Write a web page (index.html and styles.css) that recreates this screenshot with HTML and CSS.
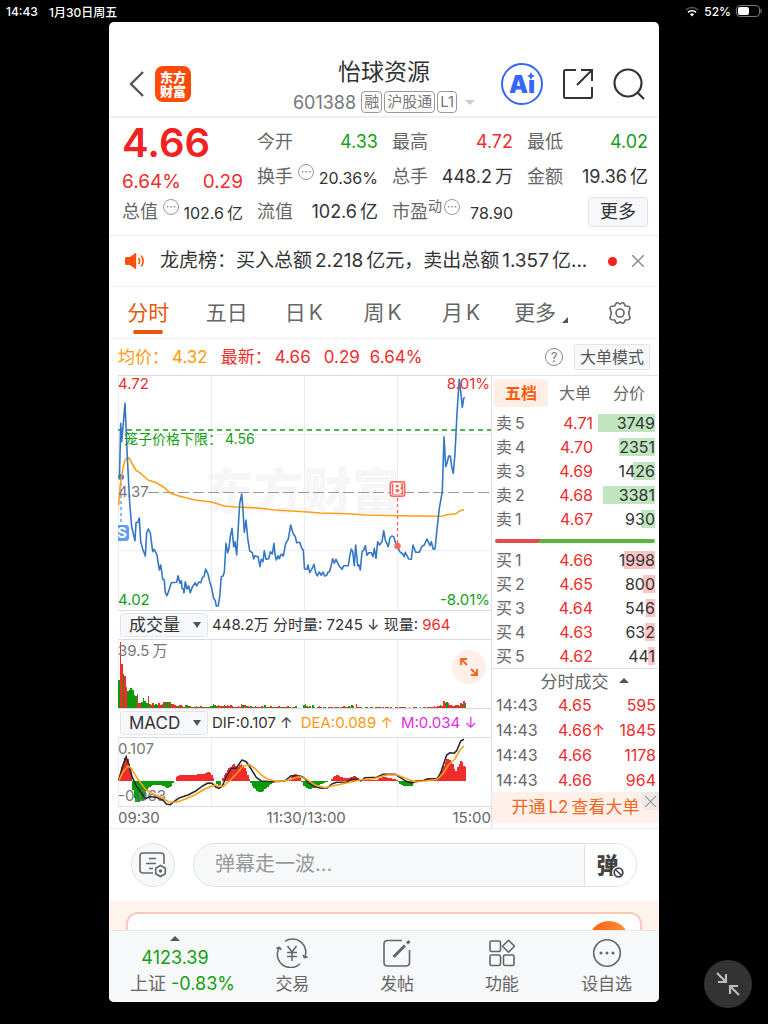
FILE: index.html
```html
<!DOCTYPE html>
<html lang="zh-CN">
<head>
  <meta charset="UTF-8" />
  <meta name="viewport" content="width=device-width, initial-scale=1" />
  <title>怡球资源 601388</title>
  <link rel="stylesheet" href="styles.css">
</head>
<body>

<div class="status">
  <span>14:43</span>
  <span class="status-date">1月30日周五</span>
  <svg width="14" height="11" viewBox="0 0 14 11"><path d="M1 4a8.500 8.500 0 0 1 12 0" fill="none" stroke="#555" stroke-width="1.500"/><path d="M3 6.400a5.700 5.700 0 0 1 8 0" fill="none" stroke="#fff" stroke-width="1.600"/><path d="M7 10.500 4.900 8.300a3 3 0 0 1 4.200 0z" fill="#fff"/></svg>
  <span>52%</span>
  <svg width="26" height="12" viewBox="0 0 26 12"><rect x=".5" y=".5" width="23" height="11" rx="3.500" fill="none" stroke="#777"/><rect x="2" y="2" width="11" height="8" rx="2" fill="#fff"/><path d="M25 4v4" stroke="#777" stroke-width="1.200"/></svg>
</div>

<div class="app">
  <header class="header">
    <div class="header-side">
      <button class="icon-button" aria-label="返回"><svg width="16" height="26" viewBox="0 0 16 26"><path d="M14 1 2 13l12 12" fill="none" stroke="#555" stroke-width="2.400"/></svg></button>
      <div class="logo">东方<br>财富</div>
    </div>
    <div class="header-title">
      <h1>怡球资源</h1>
      <div class="code">601388 <span class="badge first">融</span><span class="badge">沪股通</span><span class="badge">L1</span><i class="caret"></i></div>
    </div>
    <div class="header-side right">
      <button class="ai" aria-label="Ai">Ai<svg width="8" height="8" viewBox="0 0 8 8"><path d="M4 0 5.300 2.700 8 4 5.300 5.300 4 8 2.700 5.300 0 4l2.700-1.300z" fill="#3567ff"/></svg></button>
      <button class="icon-button" aria-label="分享"><svg width="32" height="32" viewBox="0 0 32 32" fill="none" stroke="#333" stroke-width="2"><path d="M14 2H3.500Q2 2 2 3.500v25Q2 30 3.500 30h25q1.500 0 1.500-1.500V19M19 2h11v11M30 2 15 17"/></svg></button>
      <button class="icon-button" aria-label="搜索"><svg width="32" height="32" viewBox="0 0 32 32" fill="none" stroke="#333" stroke-width="2.200"><circle cx="15" cy="15" r="13.500"/><path d="m24 24 7 7"/></svg></button>
    </div>
  </header>

  <section class="quote">
    <div class="price">4.66</div>
    <div class="cell"><span>今开</span><b class="down">4.33</b></div>
    <div class="cell"><span>最高</span><b class="up">4.72</b></div>
    <div class="cell"><span>最低</span><b class="down">4.02</b></div>

    <div class="cell change up"><b>6.64%</b><b>0.29</b></div>
    <div class="cell"><span>换手</span><i class="info">···</i><b class="small">20.36%</b></div>
    <div class="cell"><span>总手</span><b><i class="num">448.2</i>万</b></div>
    <div class="cell"><span>金额</span><b><i class="num">19.36</i>亿</b></div>

    <div class="cell"><span>总值</span><i class="info">···</i><b class="small"><i class="num">102.6</i>亿</b></div>
    <div class="cell"><span>流值</span><b><i class="num">102.6</i>亿</b></div>
    <div class="cell"><span>市盈<sup>动</sup></span><i class="info pe">···</i><b class="small">78.90</b></div>
    <div class="cell"><button class="more">更多</button></div>
  </section>

  <section class="news">
    <svg width="20" height="16" viewBox="0 0 20 16"><path d="M0 5.500Q0 4 1.500 4H5l5-3.700q1.200-.6 1.200.8v13.800q0 1.400-1.200.8L5 12H1.500Q0 12 0 10.500z" fill="#ff4f0c"/><path d="M13.500 5a5 5 0 0 1 0 6M16 2.500a8 8 0 0 1 0 11" fill="none" stroke="#ff4f0c" stroke-width="1.600"/></svg>
    <a class="news-text" href="#">龙虎榜：买入总额<i class="num">2.218</i>亿元，卖出总额<i class="num">1.357</i>亿...</a>
    <i class="dot"></i>
    <button class="icon-button" aria-label="关闭"><svg width="12" height="12" viewBox="0 0 12 12"><path d="m0 0 12 12M12 0 0 12" stroke="#888" stroke-width="1.400"/></svg></button>
  </section>

  <nav class="tabs">
    <button class="tab active">分时</button>
    <button class="tab">五日</button>
    <button class="tab">日<i class="num">K</i></button>
    <button class="tab">周<i class="num">K</i></button>
    <button class="tab">月<i class="num">K</i></button>
    <button class="tab">更多<i class="corner"></i></button>
    <button class="tab" aria-label="设置"><svg width="26" height="26" viewBox="0 0 26 26" fill="none" stroke="#666" stroke-width="1.600"><path d="M9 3.500Q10 1.800 13 4.200 16 1.800 17 3.500l1.300 2.600 3 .2Q24 7 22.500 9.500 21 13 22.500 16.500 24 19 21.300 19.700l-3 .2L17 22.500Q16 24.200 13 21.800 10 24.200 9 22.500l-1.300-2.600-3-.2Q2 19 3.500 16.500 5 13 3.500 9.500 2 7 4.700 6.300l3-.2z"/><circle cx="13" cy="13" r="4"/></svg></button>
  </nav>

  <section class="summary">
    <div class="summary-values up"><span class="avg">均价：<i class="num">4.32</i></span><span>最新：<i class="num">4.66</i></span><span>0.29</span><span>6.64%</span></div>
    <button class="help" aria-label="帮助">?</button>
    <button class="mode">大单模式</button>
  </section>

  <section class="board">
    <div class="charts">
      <svg class="chart" viewBox="0 0 373 236">
        <text class="watermark" x="87" y="134">东方财富</text>
        <path class="grid" d="M93.500 0v236M186.500 0v236M279.500 0v236M0 59.500h373M0 175.500h373M.5 0v236"/>
        <path class="frame" d="M0 .5h373M0 235.500h373"/>
        <path d="M30 117.500h343" stroke="#999" stroke-dasharray="11 4"/>
        <path d="M0 55h373" stroke="#12a012" stroke-width="1.600" stroke-dasharray="5 4"/>
        <path d="M3 102v50" stroke="#5c9df5" stroke-width="1.400" stroke-dasharray="3 3"/>
        <circle cx="3" cy="102" r="3" fill="#3a7fd5"/>
        <polyline class="line avg-line" points=".7,130 2.300,110 5,93.300 7,85 9.700,82.300 12,84.300 17.700,95 21.700,97.700 30,105 38.300,107.700 45,111.700 51.700,117.700 60,120.700 76.700,125 93.300,127 106.700,131 116.700,132 140,133 156.700,135 190,137 202,138 228.700,138.700 248.700,140 278.700,140.700 320.300,141.300 324.700,141 328.700,139.700 338,138.700 342,135.700 346,134.700"/>
        <polyline class="line price-line" points="1.500,102 2.700,48.300 3.700,66.700 7,28.300 9.300,81.700 11.700,128 13.700,151.700 17,165.700 18,147.700 20,147.300 21.300,143 22.700,166.700 24.700,174 27.300,181 28.700,157.700 30.300,154 32.300,158 34.700,176.700 36.300,174.300 39,180 41.300,195 42.700,190 44.700,204 46.300,205 47.300,217.700 49,220.700 51,215 53.300,207.700 58.700,207.300 60,200.700 62,208.300 63.300,205.700 64,213.300 65.300,214 66,218 67.300,206.700 69,214 70.700,211 72.300,217.700 74.300,212 77.300,207.700 78.700,211 80.700,207 82.700,207.700 84.700,202 86,201.700 87.700,194 90,199 91.700,206.700 93.700,213.300 95.700,223.300 97.300,225.700 98.300,231 100.300,231 101.700,221.700 103.300,201.700 105,201 106.300,197.300 108,168.300 109.700,177.700 111,173.300 112.300,161.700 114,153.300 115.700,171.700 117,166.700 118.700,180 120.300,151.700 121.700,128.300 123.700,119 125,135 126.300,157.300 128,145 129.700,163.300 131.700,176 134.300,177.700 135.700,184 137,180.700 140,181.700 142,191.700 143.300,184.300 145,186.700 146.300,175.700 148,184.300 150.700,183.700 152.300,176.700 154.300,179 156,168.300 157,179.300 158.300,185 160.300,180.700 161.300,183.700 163.300,179 165.300,181 167.700,168.300 170.300,164 172.700,150 175,158.300 177.300,161.700 178.700,167.700 181.700,167.300 183.700,173.300 185.300,175 186.500,194 189,194.300 190,190 191.700,197.700 193.700,194.300 196,189.300 197.700,197.700 199.300,201 201.300,197 203.300,200.300 205,197 206.700,201 208.700,200.300 210,197 211.300,197 213,191.700 214.700,183.700 216.300,188.300 218,184.300 221,190.700 224,194.300 225.700,190.700 230.300,190.700 231.700,181.700 233.300,174 234.700,176.700 236.300,190.700 237.700,170 239.700,191 241,190 242.300,195 244,176.700 245.700,175 247.300,170.700 249,180.300 250.700,177.700 253.300,177.700 255,181.700 256.300,173.300 258,183.300 259.700,166.700 261.300,170 264,166.700 265.700,155.700 267.300,165 270.300,171.700 272,162.700 273.700,161 275.700,161.700 277.700,168.300 279.700,171.700 281.700,176.700 284.700,179 286,181.700 287.300,177.300 290.700,184 293.300,184.300 295,170 297.700,177.300 301.300,177.300 303.700,171.700 306.300,170 309,164 312,170.700 313.300,166.700 315.300,174.300 317,174 319.300,151.700 321.300,133.300 324.300,116.700 326,61.700 327.700,91.700 329,88.300 330.700,81 332.300,81 333.700,91.700 335.300,98.300 337,78.300 339,38.300 340.300,18.300 341.300,4.300 342.700,16.700 344.300,32.300 345.700,23.300 346.700,22.300"/>
        <path d="M279.500 123v46" stroke="#f26a5e" stroke-width="1.400" stroke-dasharray="3 3"/>
        <circle cx="279.500" cy="171" r="3.200" fill="#f26a5e"/>
        <rect x="271.500" y="106" width="16" height="16" rx="3" fill="#f9685c"/>
        <rect x="273.500" y="108" width="12" height="12" rx="1" fill="none" stroke="#fff" stroke-width=".8"/>
        <text class="flag" x="279.500" y="119">B</text>
        <rect x="-4" y="150" width="15" height="16" rx="3" fill="#5c9df5"/>
        <text class="flag" x="4" y="163">S</text>
        <text class="fill-up" x="0" y="14">4.72</text>
        <text class="fill-up" x="372" y="14" text-anchor="end">8.01%</text>
        <text class="fill-down limit" x="6" y="69">笼子价格下限：<tspan dx="3">4.56</tspan></text>
        <text class="fill-gray" x="0" y="122">4.37</text>
        <text class="fill-down" x="0" y="230">4.02</text>
        <text class="fill-down" x="372" y="230" text-anchor="end">-8.01%</text>
      </svg>

      <div class="indicator">
        <span class="picker"><select aria-label="副图指标一"><option>成交量</option><option>MACD</option></select></span>
        <span>448.2万 分时量: 7245 ↓ 现量: <span class="up">964</span></span>
      </div>
      <svg class="chart" id="volume" viewBox="0 0 373 70">
        <path class="grid" d="M93.500 0v69M186.500 0v69M279.500 0v69M.5 0v69"/>
        <path class="frame" d="M0 .5h373M0 69.500h373"/>
        <g class="bars" id="volumeBars"></g>
        <text class="fill-gray" x="0" y="17">39.5<tspan dx="3">万</tspan></text>
        <circle cx="351" cy="28" r="17" fill="#ffefe6"/>
        <path d="M343 26v-6h6M343 20l6 6M359 30v6h-6M359 36l-6-6" fill="none" stroke="#f0641e" stroke-width="1.800"/>
      </svg>

      <div class="indicator">
        <span class="picker"><select aria-label="副图指标二"><option>MACD</option><option>成交量</option></select></span>
        <span>DIF:0.107 ↑</span>
        <span class="avg">DEA:0.089 ↑</span>
        <span class="macd">M:0.034 ↓</span>
      </div>
      <svg class="chart" id="macd" viewBox="0 0 373 70">
        <path class="grid" d="M93.500 0v69M186.500 0v69M279.500 0v69M.5 0v69"/>
        <path class="frame" d="M0 .5h373M0 69.500h373"/>
        <g class="bars" id="macdBars"></g>
        <text class="fill-gray" x="0" y="17">0.107</text>
        <text class="fill-gray" x="0" y="64">-0.063</text>
        <polyline class="line dif-line" points=".7,43 5,28 8,19.700 10.700,27 14,39.700 18.300,49 23.300,55.700 27.300,61.700 31.700,59.700 38.300,60.300 45,63 48.300,67 52.300,67.700 56.700,64 61.700,60.700 70,58 78.300,53.700 85,48.700 90,46 94,46.300 98.300,50.300 101,51.300 104.300,49 108.300,39.700 113.300,31.300 118.300,31.300 121,27 124,23 128.300,24.700 133.300,32.300 138.300,40.300 143.300,44 153.300,44.700 166.700,44 173.300,38.700 182,39 186,40.700 190.300,45.700 197,49.700 203.700,51.300 209.300,51 213.700,47 218.700,45.300 228.700,45 233.700,42.300 238.700,42 243,44 247,40.700 258.700,40.300 265.300,37.300 277,37.300 282,40.300 287,43.700 293.700,46 300.300,44.300 307,43.300 312,41.700 319.300,41.700 322.700,35.700 325.300,28 328.700,18 332,15.700 336,16.300 338.700,13.700 342.700,4 346,2.300"/>
        <polyline class="line avg-line" points=".7,43.700 5,34.700 10,29 13.300,31.300 20,42.300 26.700,51.300 33.300,56.300 43.300,60.300 50,64.700 58.300,65.300 66.700,62.300 76.700,58 86.700,52 96.700,48 105,49.700 111.700,43.700 120,35.300 125,29 131.700,27.700 136.700,31.300 143.300,38 150,42.300 160,44.700 170,43.300 178.300,40.300 182,39.700 188.700,42.300 197,48 207,50.700 215.300,48.700 228.700,46 242,43 255.300,41.700 268.700,38 278.700,37.700 288.700,41.700 297,44.700 308.700,43.700 319.300,42.300 325.300,36.300 330.300,28 337,22 342,13 346,9"/>
      </svg>
      <div class="axis"><span>09:30</span><span>11:30/13:00</span><span>15:00</span></div>
    </div>

    <aside class="side">
      <div class="side-tabs">
        <button class="side-tab active">五档</button>
        <button class="side-tab">大单</button>
        <button class="side-tab">分价</button>
      </div>
      <table class="depth sell">
        <tr><td>卖<i class="num">5</i></td><td>4.71</td><td style="background-size: 57px 18px">3749</td></tr>
        <tr><td>卖<i class="num">4</i></td><td>4.70</td><td style="background-size: 36px 18px">2351</td></tr>
        <tr><td>卖<i class="num">3</i></td><td>4.69</td><td style="background-size: 22px 18px">1426</td></tr>
        <tr><td>卖<i class="num">2</i></td><td>4.68</td><td style="background-size: 52px 18px">3381</td></tr>
        <tr><td>卖<i class="num">1</i></td><td>4.67</td><td style="background-size: 14px 18px">930</td></tr>
      </table>
      <div class="ratio"></div>
      <table class="depth buy">
        <tr><td>买<i class="num">1</i></td><td>4.66</td><td style="background-size: 31px 18px">1998</td></tr>
        <tr><td>买<i class="num">2</i></td><td>4.65</td><td style="background-size: 12px 18px">800</td></tr>
        <tr><td>买<i class="num">3</i></td><td>4.64</td><td style="background-size: 9px 18px">546</td></tr>
        <tr><td>买<i class="num">4</i></td><td>4.63</td><td style="background-size: 10px 18px">632</td></tr>
        <tr><td>买<i class="num">5</i></td><td>4.62</td><td style="background-size: 7px 18px">441</td></tr>
      </table>
      <button class="trades-title">分时成交<i class="caret-up"></i></button>
      <table class="trades">
        <tr><td>14:43</td><td>4.65</td><td>595</td></tr>
        <tr><td>14:43</td><td>4.66↑</td><td>1845</td></tr>
        <tr><td>14:43</td><td>4.66</td><td>1178</td></tr>
        <tr><td>14:43</td><td>4.66</td><td>964</td></tr>
      </table>
      <div class="upsell">
        <a href="#">开通<i class="num">L2</i>查看大单</a>
        <button class="upsell-close" aria-label="关闭"><svg width="11" height="11" viewBox="0 0 11 11"><path d="m0 0 11 11M11 0 0 11" stroke="#999" stroke-width="1.200"/></svg></button>
      </div>
    </aside>
  </section>

  <section class="comment">
    <button class="round" aria-label="弹幕设置"><svg width="28" height="26" viewBox="0 0 28 26" fill="none" stroke="#666" stroke-width="1.600"><path d="M14 21H4q-3 0-3-3V4q0-3 3-3h18q3 0 3 3v8M10 6.500h7M7 11.500h10M10 16.500h4"/><path d="m21.500 13.500 4.800 2.800v5.400l-4.800 2.800-4.800-2.800v-5.400z"/><circle cx="21.500" cy="19" r=".9" fill="#666"/></svg></button>
    <div class="pill">
      <input type="text" placeholder="弹幕走一波..." aria-label="弹幕">
      <button class="danmu" aria-label="关闭弹幕">弹<svg width="13" height="13" viewBox="0 0 13 13"><circle cx="6.500" cy="6.500" r="6.500" fill="#fff"/><circle cx="6.500" cy="6.500" r="4.300" fill="none" stroke="#444" stroke-width="1.800"/><path d="m3.500 3.500 6 6" stroke="#444" stroke-width="1.600"/></svg></button>
    </div>
  </section>

  <section class="promo">
    <div class="promo-card"><i class="promo-ball"></i></div>
  </section>

  <footer class="bottom">
    <a class="index" href="#">
      <span class="index-value"><i class="caret-up"></i>4123.39</span>
      <span>上证 <span class="down">-0.83%</span></span>
    </a>
    <button class="action"><svg width="32" height="30" viewBox="0 0 32 30" fill="none" stroke="#666" stroke-width="1.600"><path d="M9 3.300A13.300 13.300 0 0 1 28.500 20M28.500 20l-1.500-3M28.500 20l3-1.500M24 25.700A13.300 13.300 0 0 1 3.500 9M3.500 9l-3 1.500M3.500 9 5 12"/><path d="m11.500 8 4.500 6 4.500-6M16 14v9M11 14.500h10M11 18.500h10"/></svg>交易</button>
    <button class="action"><svg width="28" height="30" viewBox="0 0 28 30" fill="none" stroke="#666" stroke-width="1.600"><path d="M19 2.500H4.500Q1 2.500 1 6v18.500Q1 28 4.500 28h18.500q3.500 0 3.500-3.500V12"/><path d="M10.500 19 22 7.500" stroke-width="3"/><path d="m24 5.500 2.500-2.500" stroke-width="3"/></svg>发帖</button>
    <button class="action"><svg width="26" height="30" viewBox="0 0 26 30" fill="none" stroke="#666" stroke-width="1.600"><rect x="1" y="3" width="10.500" height="10.500" rx="1.500"/><rect x="1" y="17" width="10.500" height="10.500" rx="1.500"/><rect x="14.500" y="17" width="10.500" height="10.500" rx="1.500"/><path d="m19.500 2.200 6 6-6 6-6-6z" stroke-linejoin="round"/></svg>功能</button>
    <button class="action"><svg width="30" height="30" viewBox="0 0 30 30"><circle cx="15" cy="15" r="13.300" fill="none" stroke="#666" stroke-width="1.600"/><g fill="#666"><circle cx="9" cy="15" r="1.500"/><circle cx="15" cy="15" r="1.500"/><circle cx="21" cy="15" r="1.500"/></g></svg>设自选</button>
  </footer>
</div>

<button class="shrink" aria-label="缩小"><svg width="24" height="24" viewBox="0 0 24 24" fill="none" stroke="#bbb" stroke-width="2.200"><path d="m1 1 9 9M10 2v8H2M23 23l-9-9M14 22v-8h8"/></svg></button>

<script>
  const STEP = 1.555;
  const RED = '#f22c2c';
  const GREEN = '#0a9b0a';

  // positive = red bar, negative = green bar
  const volume = [
    -28, 66, 44, -34, 32, 21, -17, -18, -20, -18, -13, -12, 14, 5, 5, -6, -10, -7, -5, 12,
    -4, 3, 5, -3, -4, -3, 5, 3, -4, 6, -6, -6, 6, -6, 4, 4, 3, 2, -2, 3,
    3, -2, 1, 3, -3, -2, 2, 1, 1, -1, 2, -1, 1, 2, -1, 1, -1, 1, 1, -2,
    -2, -4, -3, 2, 3, 2, -2, 2, 3, -2, 3, 2, 3, 2, -1, 1, 1, 2, 1, 4,
    -3, 3, -2, 2, 1, -2, 1, -1, 2, 1, 1, -1, 2, 1, -3, 1, -1, 1, 2, -1,
    1, 1, -1, 2, -1, 1, 1, -1, 1, 2, -1, 0, 1, 1, -2, 0, 0, 0, 0, -3,
    -4, 2, 1, -2, 0, -3, 1, 0, -1, 2, 1, 0, -1, 1, 0, -1, 1, 1, 0, 1,
    1, -1, 0, 1, -1, 2, 1, -1, -2, 1, -3, 2, 0, 4, 1, -1, 1, 0, 0, -1,
    1, 0, -1, 1, 0, -1, 1, 1, -1, 0, 1, 0, 1, -1, 0, 1, 0, 0, -1, 1,
    0, 1, -1, 1, 1, 0, 0, 1, 0, 0, 1, -1, 0, 0, 1, 0, -1, 1, 0, 1,
    1, -1, 1, 2, 1, 2, 2, -3, 2, 7, 5, -6, 5, 3, 3, 2, -2, 3, 3, -2,
    5, -4, 7, -5
  ];

  // outline of the MACD histogram, [x, height]
  const macd = [
    [0, 2], [5, 20], [8, 26], [11, 16], [13, 4], [14, -10], [16, -20], [18, -22], [25, -19],
    [29, -8], [33, -5], [40, -4], [46, -6], [50, -8], [53, -5], [56, 0], [58, 4], [63, 6],
    [70, 5], [78, 6], [86, 7], [90, 9], [94, 5], [96, 0], [98, -4], [101, -5], [103, 0],
    [106, 6], [110, 12], [115, 17], [119, 12], [122, 17], [125, 14], [128, 9], [131, 0],
    [134, -6], [139, -11], [143, -12], [147, -8], [152, -4], [157, 0], [170, 0], [173, 4],
    [176, 7], [182, 4], [183, 0], [185, -5], [189, -8], [194, -8], [202, -4], [209, -1],
    [212, 0], [214, 3], [219, 6], [224, 3], [230, 2], [235, 5], [239, 3], [242, 0], [249, 1],
    [259, 1], [265, 4], [269, 3], [277, 1], [279, 0], [282, -4], [287, -6], [294, -5],
    [297, 0], [305, 1], [310, 3], [317, 2], [320, 4], [324, 12], [328, 22], [331, 21],
    [334, 17], [337, 9], [341, 18], [343, 20], [345, 15], [348, 13]
  ];

  function addBar(group, x, base, value) {
    if (!value) return;
    const rect = document.createElementNS('http://www.w3.org/2000/svg', 'rect');
    rect.setAttribute('x', x);
    rect.setAttribute('width', STEP);
    rect.setAttribute('y', value > 0 || group.id === 'volumeBars' ? base - Math.abs(value) : base);
    rect.setAttribute('height', Math.abs(value));
    rect.setAttribute('fill', value > 0 ? RED : GREEN);
    group.appendChild(rect);
  }

  function heightAt(x) {
    const i = macd.findIndex(p => p[0] > x);
    const [x0, y0] = macd[i - 1];
    const [x1, y1] = macd[i];
    return y0 + (y1 - y0) * (x - x0) / (x1 - x0);
  }

  const volumeBars = document.getElementById('volumeBars');
  volume.forEach((v, i) => addBar(volumeBars, i * STEP, 69, v));

  const macdBars = document.getElementById('macdBars');
  for (let x = 0; x < 347; x += STEP) {
    addBar(macdBars, x, 43.5, heightAt(x));
  }
</script>

</body>
</html>
```

FILE: styles.css
```css
* {
  box-sizing: border-box;
}

body {
  margin: 0;
  background: #000;
  color: #333;
  font-family: Inter, "Noto Sans CJK SC", sans-serif;
  font-size: 16px;
}

button,
input,
select {
  font: inherit;
  color: inherit;
  background: none;
  border: none;
  padding: 0;
  margin: 0;
}

button {
  cursor: pointer;
}

a {
  color: inherit;
  text-decoration: none;
}

svg {
  display: block;
  flex: none;
}

b,
i {
  font-weight: 400;
  font-style: normal;
}

.up {
  color: #f22c2c;
}

.down {
  color: #12a012;
}

.avg {
  color: #ff9a0d;
}

.macd {
  color: #e32ae3;
}

.num {
  margin: 0 3px;
}

/* device status bar */
.status {
  display: flex;
  align-items: center;
  gap: 5px;
  height: 22px;
  padding: 0 6px;
  color: #fff;
  font-size: 12px;
  font-weight: 500;
}

.status-date {
  margin-left: 6px;
  margin-right: auto;
}

.app {
  margin: 0 109px 22px;
  background: #fff;
  border-radius: 5px;
  overflow: hidden;
}

/* header */
.header {
  display: grid;
  grid-template-columns: 1fr auto 1fr;
  align-items: center;
  height: 96px;
  padding: 34px 14px 0;
  border-bottom: 2px solid #f0f0f2;
}

.header-side {
  display: flex;
  align-items: center;
  gap: 10px;
  padding: 0 0 4px 6px;
}

.header-side.right {
  justify-content: flex-end;
  gap: 19px;
}

.logo {
  width: 36px;
  height: 36px;
  padding-top: 4px;
  border-radius: 8px;
  background: #ff4a08;
  color: #fff;
  font-size: 13px;
  font-weight: 900;
  line-height: 14px;
  text-align: center;
}

.header-title {
  text-align: center;
}

h1 {
  margin: 0;
  font-size: 23px;
  font-weight: 400;
  line-height: 32px;
}

.code {
  display: flex;
  align-items: center;
  gap: 2px;
  height: 28px;
  color: #777;
  font-size: 18px;
}

.badge {
  height: 22px;
  padding: 0 2px;
  border: 1px solid #999;
  border-radius: 4px;
  font-size: 15px;
  line-height: 20px;
}

.badge.first {
  margin-left: 3px;
}

.caret {
  margin-left: 6px;
  border: 5px solid transparent;
  border-top-color: #ccc;
  border-bottom: 0;
}

.ai {
  display: flex;
  align-items: center;
  justify-content: center;
  width: 42px;
  height: 42px;
  border: 2px solid #3567ff;
  border-radius: 50%;
  color: #3567ff;
  font-size: 24px;
  font-weight: 900;
  position: relative;
}

.ai svg {
  position: absolute;
  top: 7px;
  right: 6px;
  background: #fff;
}

/* quote */
.quote {
  display: grid;
  grid-template-columns: repeat(4, 1fr);
  grid-auto-rows: 35px;
  column-gap: 14px;
  padding: 6px 11px 6px 13px;
  border-bottom: 1px solid #ececef;
  font-size: 18px;
}

.price {
  color: #f22222;
  font-size: 40px;
  font-weight: 600;
  line-height: 38px;
}

.cell {
  display: flex;
  align-items: center;
  line-height: 24px;
  white-space: nowrap;
}

.cell span {
  color: #666;
}

.cell b:last-child {
  margin-left: auto;
}

.cell.change {
  padding-top: 10px;
  font-size: 19px;
}

.cell .small {
  padding-top: 3px;
  font-size: 16px;
}

sup {
  font-size: 14px;
  line-height: 0;
}

.info {
  width: 16px;
  height: 16px;
  margin: 0 0 9px 5px;
  border: 1px solid #999;
  border-radius: 50%;
  color: #777;
  font-size: 12px;
  line-height: 14px;
  text-align: center;
}

.info.pe {
  margin-left: 2px;
}

.more {
  width: 60px;
  height: 30px;
  margin-left: auto;
  border: 1px solid #e3e5ea;
  border-radius: 3px;
  background: #f6f8fb;
  line-height: 26px;
}

/* news */
.news {
  display: flex;
  align-items: center;
  height: 51px;
  padding: 0 15px 0 16px;
  border-bottom: 1px solid #f0f0f2;
}

.news-text {
  flex: 1;
  margin-left: 15px;
  overflow: hidden;
  white-space: nowrap;
  font-size: 19px;
  line-height: 26px;
}

.dot {
  width: 9px;
  height: 9px;
  margin: 0 15px;
  border-radius: 50%;
  background: #f22222;
}

/* period tabs */
.tabs {
  display: grid;
  grid-template-columns: repeat(7, 1fr);
  height: 52px;
  border-bottom: 1px solid #f0f0f2;
}

.tab {
  position: relative;
  color: #666;
  font-size: 21px;
  line-height: 48px;
  white-space: nowrap;
}

.tab svg {
  margin: 0 auto;
}

.tab.active {
  color: #e8560c;
}

.tab.active::after {
  content: "";
  position: absolute;
  bottom: 4px;
  left: calc(50% - 15px);
  width: 30px;
  height: 4px;
  border-radius: 2px;
  background: #e8560c;
}

.corner {
  display: inline-block;
  margin-left: 6px;
  border: 3px solid #555;
  border-top-color: transparent;
  border-left-color: transparent;
  vertical-align: -3px;
}

/* last price summary */
.summary {
  display: flex;
  align-items: center;
  gap: 11px;
  height: 36px;
  padding: 0 9px;
  font-size: 17px;
}

.summary-values {
  margin-right: auto;
  line-height: 32px;
  white-space: nowrap;
}

.summary-values > span {
  margin-right: 10px;
}

.help {
  width: 18px;
  height: 18px;
  border: 1px solid #888;
  border-radius: 50%;
  color: #777;
  font-size: 13px;
  line-height: 16px;
}

.mode {
  height: 26px;
  padding: 0 5px;
  border: 1px solid #e3e5ea;
  border-radius: 3px;
  background: #f6f8fb;
  color: #555;
  font-size: 16px;
  line-height: 22px;
}

/* charts */
.board {
  display: grid;
  grid-template-columns: 1fr 168px;
  border-bottom: 1px solid #ececef;
}

.charts {
  padding-left: 9px;
}

.chart {
  width: 100%;
  height: auto;
  font-size: 15px;
}

.limit {
  font-size: 14px;
}

.bars {
  shape-rendering: crispEdges;
}

.grid {
  fill: none;
  stroke: #e9ecf4;
}

.frame {
  fill: none;
  stroke: #d9dbe2;
}

.line {
  fill: none;
  stroke-width: 1.6;
  stroke-linejoin: round;
}

.price-line {
  stroke: #3577c4;
}

.avg-line {
  stroke: #ff9f1a;
}

.dif-line {
  stroke: #2b2b2b;
}

.watermark {
  fill: #f6f6f7;
  font-size: 49px;
  font-weight: 900;
}

.flag {
  fill: #fff;
  font-weight: 700;
  text-anchor: middle;
}

.fill-up {
  fill: #f22c2c;
}

.fill-down {
  fill: #12a012;
}

.fill-gray {
  fill: #777;
}

.indicator {
  display: flex;
  align-items: center;
  gap: 8px;
  height: 28px;
  padding-left: 2px;
  font-size: 15px;
  line-height: 24px;
  white-space: nowrap;
}

.picker {
  position: relative;
  margin-right: -4px;
}

.picker select {
  display: block;
  width: 88px;
  height: 24px;
  padding-left: 8px;
  appearance: none;
  border: 1px solid #e3e5ea;
  border-radius: 3px;
  background: #f6f8fb;
  font-size: 17px;
  line-height: 22px;
}

.picker::after {
  content: "";
  position: absolute;
  top: 9px;
  right: 7px;
  border: 4px solid transparent;
  border-top: 6px solid #555;
  border-bottom: 0;
}

.axis {
  display: flex;
  justify-content: space-between;
  height: 21px;
  color: #666;
  font-size: 15px;
  line-height: 21px;
}

/* order book */
.side {
  border-left: 1px solid #dfe1e7;
  border-top: 1px solid #dfe1e7;
}

.side-tabs {
  display: grid;
  grid-template-columns: repeat(3, 54px);
  padding: 3px 2px 4px;
}

.side-tab {
  height: 28px;
  border-radius: 4px;
  color: #666;
  line-height: 26px;
}

.side-tab.active {
  background: #ffeee5;
  color: #ff5a0a;
  font-weight: 700;
}

table {
  width: 100%;
  border-collapse: collapse;
  table-layout: fixed;
}

td {
  padding: 0;
  text-align: right;
}

td:first-child {
  width: 49px;
  padding-left: 4px;
  color: #666;
  text-align: left;
}

td:nth-child(2) {
  width: 52px;
  color: #f22c2c;
}

.depth tr {
  height: 24px;
  line-height: 24px;
}

.depth {
  width: calc(100% - 4px);
}

.depth td:last-child {
  background: linear-gradient(#bfe6bf, #bfe6bf) no-repeat right center;
}

.depth.buy td:last-child {
  background-image: linear-gradient(#ffc4c4, #ffc4c4);
}

.ratio {
  height: 4px;
  margin: 8px 4px 5px 3px;
  border-radius: 2px;
  background: linear-gradient(120deg, #e84a4a 28%, #57b83e 28%);
}

.trades-title {
  display: flex;
  align-items: center;
  justify-content: center;
  gap: 10px;
  width: 100%;
  height: 24px;
  padding-left: 18px;
  border-top: 1px solid #dfe1e7;
  color: #666;
  font-size: 17px;
}

.caret-up {
  border: 5px solid transparent;
  border-bottom: 5px solid #555;
  border-top: 0;
}

.trades {
  width: calc(100% - 3px);
}

.trades tr {
  height: 25px;
}

.trades td {
  color: #f22c2c;
}

.trades td:first-child {
  color: #666;
}

.trades td:nth-child(2) {
  width: 60px;
  padding-left: 17px;
  text-align: left;
}

.upsell {
  position: relative;
  height: 31px;
  background: #fff1ea;
  color: #f0641e;
  font-size: 17px;
  line-height: 30px;
  text-align: center;
}

.upsell-close {
  position: absolute;
  top: 0;
  right: 0;
  display: flex;
  align-items: center;
  justify-content: center;
  width: 18px;
  height: 18px;
  border-bottom-left-radius: 8px;
  background: #efe8e6;
}

/* comment box */
.comment {
  display: flex;
  gap: 18px;
  padding: 14px 22px;
}

.round {
  display: flex;
  align-items: center;
  justify-content: center;
  width: 44px;
  height: 44px;
  border: 1px solid #e1e3e8;
  border-radius: 50%;
  background: #f7f8fa;
}

.pill {
  display: flex;
  flex: 1;
  height: 44px;
  border: 1px solid #dfe1e7;
  border-radius: 22px;
  background: #f7f8fa;
  overflow: hidden;
}

.pill input {
  flex: 1;
  min-width: 0;
  padding: 0 21px 2px;
  outline: none;
  font-size: 20px;
}

.pill input::placeholder {
  color: #999;
}

.danmu {
  position: relative;
  width: 52px;
  padding-right: 6px;
  border-left: 1px solid #dfe1e7;
  background: #fff;
  color: #444;
  font-size: 22px;
  font-weight: 900;
  line-height: 38px;
}

.danmu svg {
  position: absolute;
  right: 11px;
  bottom: 7px;
}

/* promo strip, cut off by the bottom bar */
.promo {
  height: 29px;
  padding: 11px 17px 0;
  background: #fff3ee;
  overflow: hidden;
}

.promo-card {
  height: 60px;
  padding: 7px 11px;
  border: 2px solid #ffc6ba;
  border-radius: 12px;
  background: #fff;
}

.promo-ball {
  display: block;
  width: 40px;
  height: 40px;
  margin-left: auto;
  border-radius: 50%;
  background: linear-gradient(90deg, #ff5a0a, #ff9440);
}

/* bottom bar */
.bottom {
  display: grid;
  grid-template-columns: 131px repeat(4, 1fr);
  height: 72px;
  border-top: 1px solid #e6e8ec;
  background: #f7f8fa;
  color: #666;
}

.index {
  display: flex;
  flex-direction: column;
  padding: 5px 0 0 21px;
  font-size: 18px;
  line-height: 26px;
  white-space: nowrap;
}

.index-value {
  display: flex;
  flex-direction: column;
  align-items: center;
  gap: 4px;
  width: 90px;
  color: #12a012;
}

.action {
  display: flex;
  flex-direction: column;
  align-items: center;
  padding-top: 7px;
  font-size: 17px;
  line-height: 33px;
}

.shrink {
  position: fixed;
  right: 16px;
  bottom: 16px;
  display: flex;
  align-items: center;
  justify-content: center;
  width: 48px;
  height: 48px;
  border-radius: 50%;
  background: #333;
}
```
